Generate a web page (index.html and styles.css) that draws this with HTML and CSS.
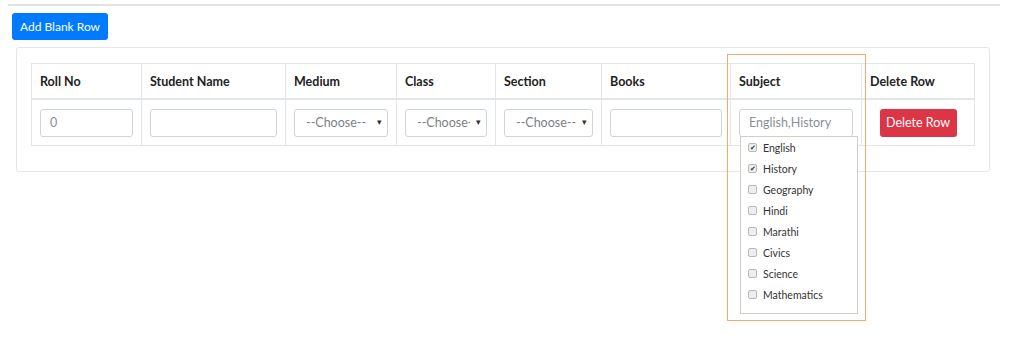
FILE: index.html
```html
<!DOCTYPE html>
<html>
<head>
<meta charset="utf-8">
<link rel="stylesheet" href="styles.css">
</head>
<body>
<div class="page">
  <div class="rule"></div>
  <button class="btn btn-add">Add Blank Row</button>
  <div class="card">
    <table class="grid">
      <colgroup>
        <col class="c1"><col class="c2"><col class="c3"><col class="c4"><col class="c5"><col class="c6"><col class="c7"><col class="c8">
      </colgroup>
      <thead>
        <tr><th>Roll No</th><th>Student Name</th><th>Medium</th><th>Class</th><th>Section</th><th>Books</th><th>Subject</th><th>Delete Row</th></tr>
      </thead>
      <tbody>
        <tr>
          <td><div class="field">0</div></td>
          <td><div class="field"></div></td>
          <td><div class="field select"><span class="sel-text">--Choose--</span><span class="caret">▾</span></div></td>
          <td><div class="field select"><span class="sel-text">--Choose--</span><span class="caret">▾</span></div></td>
          <td><div class="field select"><span class="sel-text">--Choose--</span><span class="caret">▾</span></div></td>
          <td><div class="field"></div></td>
          <td class="subject-cell">
            <div class="field">English,History</div>
            <ul class="dropdown">
              <li><span class="cb on">✔</span>English</li>
              <li><span class="cb on">✔</span>History</li>
              <li><span class="cb"></span>Geography</li>
              <li><span class="cb"></span>Hindi</li>
              <li><span class="cb"></span>Marathi</li>
              <li><span class="cb"></span>Civics</li>
              <li><span class="cb"></span>Science</li>
              <li><span class="cb"></span>Mathematics</li>
            </ul>
          </td>
          <td class="center"><button class="btn btn-del">Delete Row</button></td>
        </tr>
      </tbody>
    </table>
  </div>
  <div class="highlight"></div>
</div>
</body>
</html>
```
FILE: styles.css
```css
html, body { margin: 0; padding: 0; background: #fff; }
body { font-family: "Lato", "Open Sans", sans-serif; color: #212529; }
.page { position: relative; padding: 4px 0 0 8px; height: 347px; }
.rule { width: 992px; height: 2px; background: #e2e2e2; }
.btn { font-family: inherit; border: none; border-radius: 3px; color: #fff; cursor: pointer; }
.btn-add { display: block; margin: 7px 0 0 4px; height: 27px; width: 96px; padding: 0; background: #007bff; font-size: 12px; }
.card { margin: 7px 0 0 8px; width: 943px; height: 93px; padding: 15px 15px 15px 14px; border: 1px solid #e4e6e8; border-radius: 3px; }
.grid { border-collapse: collapse; table-layout: fixed; width: 943px; }
.c1 { width: 110px; } .c2 { width: 144px; } .c3 { width: 111px; } .c4 { width: 99px; }
.c5 { width: 106px; } .c6 { width: 129px; } .c7 { width: 131px; } .c8 { width: 113px; }
.grid th, .grid td { border: 1px solid #e3e6e8; padding: 0 8px; text-align: left; vertical-align: middle; }
.grid th { height: 34px; font-size: 12.5px; font-weight: 700; color: #222; border-bottom-width: 2px; }
.grid td { height: 45px; }
.field { box-sizing: border-box; height: 28px; width: 100%; border: 1px solid #ced4da; border-radius: 3px; font-size: 12.5px; color: #8a9096; padding: 0 9px; line-height: 26px; position: relative; }
.select { display: flex; padding: 0 0 0 11px; white-space: nowrap; }
.sel-text { flex: 1; overflow: hidden; color: #7b8187; }
.caret { flex: 0 0 16px; font-size: 9px; color: #333; text-align: center; line-height: 24px; }
.subject-cell { position: relative; }
.dropdown { position: absolute; left: 9px; top: 36px; width: 118px; height: 178px; box-sizing: border-box; margin: 0; padding: 0 0 0 7px; list-style: none; border: 1px solid #cfd0c4; background: #fff; z-index: 2; }
.dropdown li { height: 21px; display: flex; align-items: center; font-size: 10.5px; color: #333; }
.cb { box-sizing: border-box; width: 9px; height: 9px; border: 1px solid #b8b8b8; border-radius: 2px; background: #eee; margin-right: 6px; font-size: 7px; line-height: 7px; text-align: center; color: #333; }
.center { text-align: center !important; }
.btn-del { height: 28px; width: 77px; padding: 0; background: #dc3545; font-size: 12.5px; }
.highlight { position: absolute; left: 727px; top: 54px; width: 137px; height: 265px; border: 1px solid #f0aa72; z-index: 3; pointer-events: none; }
```
